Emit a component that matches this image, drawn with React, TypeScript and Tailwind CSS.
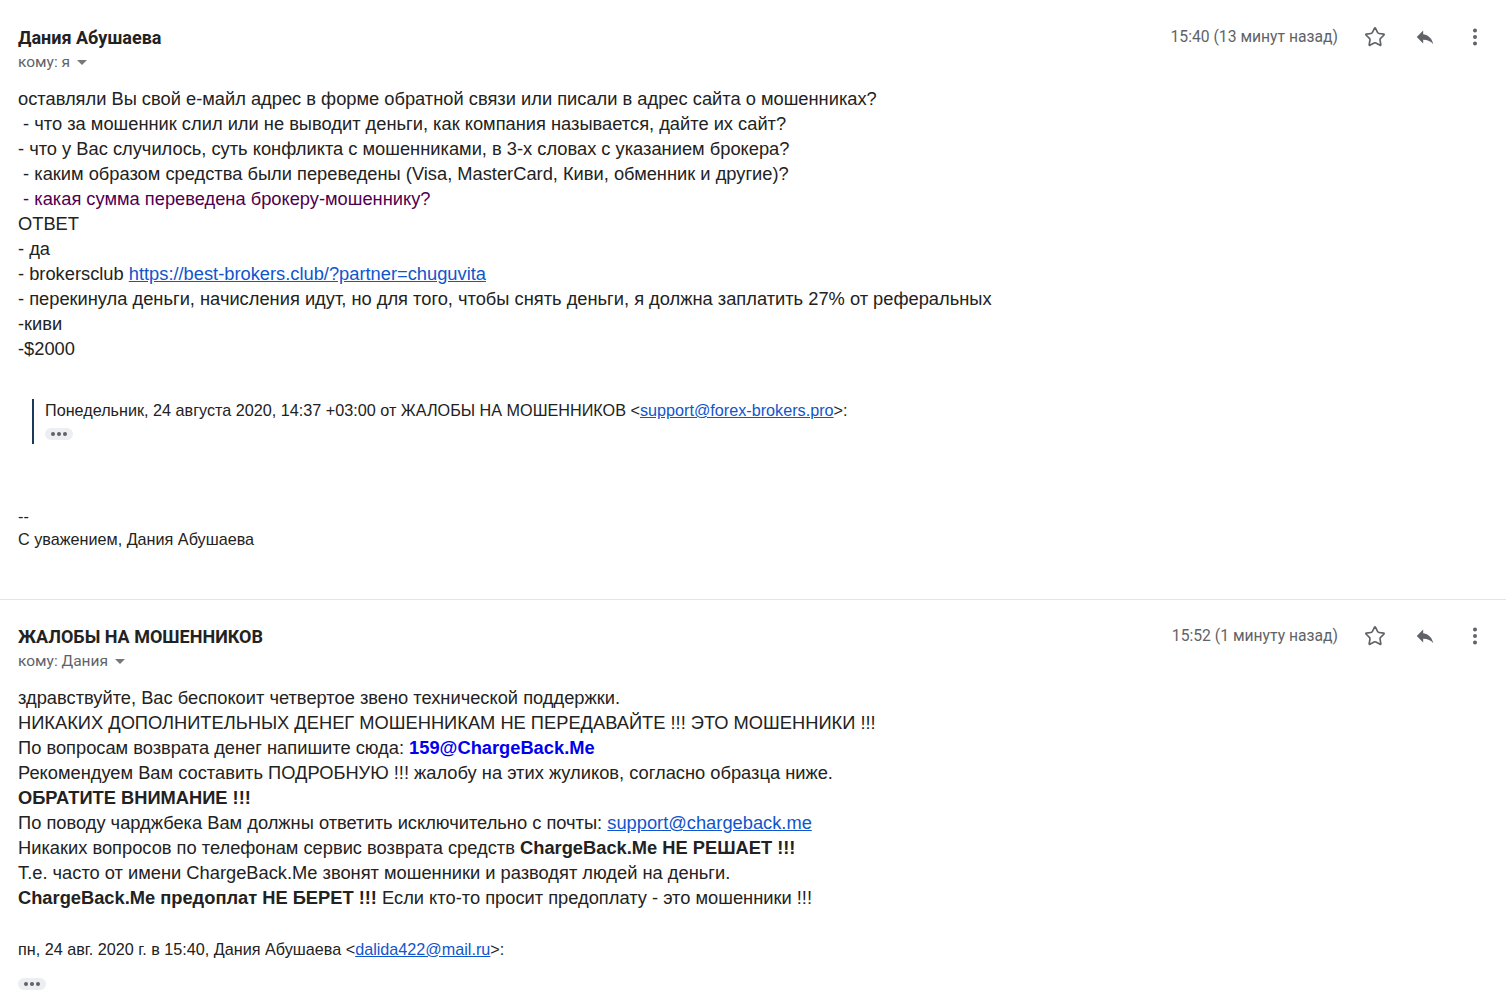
import { Star, MoreVertical } from 'lucide-react';

const ui = { fontFamily: 'Roboto, "Noto Sans", sans-serif' };
const body = { fontFamily: '"Liberation Sans", Arial, sans-serif' };

function Header({ name, to, time }: { name: string; to: string; time: string }) {
  return (
    <div className="flex items-start justify-between" style={ui}>
      <div>
        <div className="text-[18px] leading-[20px] font-bold text-[#222]">{name}</div>
        <div className="mt-[4px] flex items-center gap-[7px] text-[15.5px] leading-[20px] text-[#5f6368]">
          <span>{to}</span>
          <svg width="10" height="6" viewBox="0 0 10 6" className="mt-[1px]">
            <path d="M0 0h10L5 5z" fill="#777" />
          </svg>
        </div>
      </div>
      <div className="flex items-center -mt-[2px]">
        <span className="text-[15.7px] leading-[20px] text-[#5f6368] mr-[26px]">{time}</span>
        <Star size={22} strokeWidth={1.8} className="text-[#5f6368] mr-[28px]" />
        <svg width="22" height="22" viewBox="0 0 24 24" className="mr-[28px]">
          <path d="M10 9V5l-7 7 7 7v-4.1c5 0 8.5 1.6 11 5.1-1-5-4-10-11-11z" fill="#5f6368" />
        </svg>
        <MoreVertical size={22} strokeWidth={2.4} className="text-[#5f6368] mr-[20px]" />
      </div>
    </div>
  );
}

function Chip() {
  return (
    <div className="w-[28px] h-[12px] rounded-[6px] bg-[#eceef1] flex items-center justify-center gap-[2px]">
      <span className="w-[4px] h-[4px] rounded-full bg-[#5f6368]" />
      <span className="w-[4px] h-[4px] rounded-full bg-[#5f6368]" />
      <span className="w-[4px] h-[4px] rounded-full bg-[#5f6368]" />
    </div>
  );
}

export default function App() {
  return (
    <div className="w-[1506px] min-h-[1006px] bg-white text-[#222]">
      <section className="pl-[18px] pt-[28px] pb-[48px] border-b border-[#e5e5e5]">
        <Header name="Дания Абушаева" to="кому: я" time="15:40 (13 минут назад)" />
        <div className="mt-[14px] text-[18.3px] leading-[25px]" style={body}>
          <div>оставляли Вы свой е-майл адрес в форме обратной связи или писали в адрес сайта о мошенниках?</div>
          <div>&nbsp;- что за мошенник слил или не выводит деньги, как компания называется, дайте их сайт?</div>
          <div>- что у Вас случилось, суть конфликта с мошенниками, в 3-х словах с указанием брокера?</div>
          <div>&nbsp;- каким образом средства были переведены (Visa, MasterCard, Киви, обменник и другие)?</div>
          <div className="text-[#500050]">&nbsp;- какая сумма переведена брокеру-мошеннику?</div>
          <div>ОТВЕТ</div>
          <div>- да</div>
          <div>
            - brokersclub <span className="text-[#1155cc] underline">https://best-brokers.club/?partner=chuguvita</span>
          </div>
          <div>- перекинула деньги, начисления идут, но для того, чтобы снять деньги, я должна заплатить 27% от реферальных</div>
          <div>-киви</div>
          <div>-$2000</div>
        </div>
        <div className="mt-[38px] ml-[14px] border-l-2 border-[#1a3a5c] pl-[11px] pb-[4px] text-[16.2px] text-[#222]" style={body}>
          <div className="leading-[22px]">
            Понедельник, 24 августа 2020, 14:37 +03:00 от ЖАЛОБЫ НА МОШЕННИКОВ &lt;
            <span className="text-[#1155cc] underline">support@forex-brokers.pro</span>&gt;:
          </div>
          <div className="mt-[7px]">
            <Chip />
          </div>
        </div>
        <div className="mt-[61px] text-[16.2px] leading-[23px]" style={body}>
          <div>--</div>
          <div>С уважением, Дания Абушаева</div>
        </div>
      </section>

      <section className="pl-[18px] pt-[27px]">
        <Header name="ЖАЛОБЫ НА МОШЕННИКОВ" to="кому: Дания" time="15:52 (1 минуту назад)" />
        <div className="mt-[14px] text-[18.3px] leading-[25px]" style={body}>
          <div>здравствуйте, Вас беспокоит четвертое звено технической поддержки.</div>
          <div>НИКАКИХ ДОПОЛНИТЕЛЬНЫХ ДЕНЕГ МОШЕННИКАМ НЕ ПЕРЕДАВАЙТЕ !!! ЭТО МОШЕННИКИ !!!</div>
          <div>
            По вопросам возврата денег напишите сюда: <b className="text-[#0000ee]">159@ChargeBack.Me</b>
          </div>
          <div>Рекомендуем Вам составить ПОДРОБНУЮ !!! жалобу на этих жуликов, согласно образца ниже.</div>
          <div className="font-bold">ОБРАТИТЕ ВНИМАНИЕ !!!</div>
          <div>
            По поводу чарджбека Вам должны ответить исключительно с почты:{' '}
            <span className="text-[#1155cc] underline">support@chargeback.me</span>
          </div>
          <div>
            Никаких вопросов по телефонам сервис возврата средств <b>ChargeBack.Me НЕ РЕШАЕТ !!!</b>
          </div>
          <div>Т.е. часто от имени ChargeBack.Me звонят мошенники и разводят людей на деньги.</div>
          <div>
            <b>ChargeBack.Me предоплат НЕ БЕРЕТ !!!</b> Если кто-то просит предоплату - это мошенники !!!
          </div>
        </div>
        <div className="mt-[28px] text-[16.2px] leading-[22px]" style={body}>
          пн, 24 авг. 2020 г. в 15:40, Дания Абушаева &lt;
          <span className="text-[#1155cc] underline">dalida422@mail.ru</span>&gt;:
        </div>
        <div className="mt-[18px]">
          <Chip />
        </div>
      </section>
    </div>
  );
}
